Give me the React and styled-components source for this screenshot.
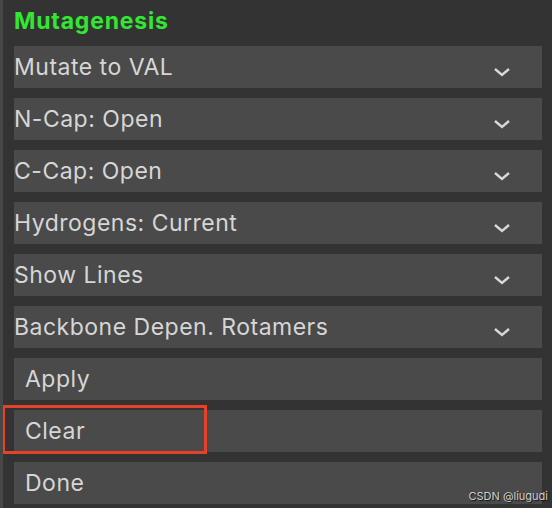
import React from "react";
import styled, { createGlobalStyle } from "styled-components";

const Global = createGlobalStyle`
  body {
    margin: 0;
    background: #333333;
    font-family: Inter, "Liberation Sans", Arial, sans-serif;
  }
`;

const Panel = styled.div`
  position: relative;
  width: 552px;
  height: 508px;
  box-sizing: border-box;
  padding: 0 10px 0 14px;
  background: #333333;
  border-left: 3px solid #474747;
  overflow: hidden;
`;

const Title = styled.div`
  height: 46px;
  margin-left: -3px;
  padding-top: 7px;
  box-sizing: border-box;
  font-size: 23px;
  font-weight: bold;
  letter-spacing: 0.8px;
  color: #33e633;
`;

const List = styled.div`
  display: flex;
  flex-direction: column;
  gap: 10px;
  margin-left: -3px;
`;

const Row = styled.div`
  position: relative;
  height: 42px;
  display: flex;
  align-items: center;
  justify-content: space-between;
  padding-left: ${(p) => (p.$button ? "11px" : "0")};
  padding-right: 31px;
  background: #4a4a4a;
  color: #d6d6d6;
  font-size: 23px;
  letter-spacing: 0.5px;
`;

const Chevron = styled.svg`
  width: 18px;
  height: 10px;
  margin-top: 9px;
`;

const Highlight = styled.div`
  position: absolute;
  left: -12px;
  top: -5px;
  width: 205px;
  height: 49px;
  box-sizing: border-box;
  border: 3px solid #e8412a;
`;

const Mark = styled.div`
  position: absolute;
  right: 4px;
  bottom: 5px;
  font-size: 11px;
  color: #cfcfcf;
  text-shadow: 1px 1px 1px #111;
`;

const selects = [
  "Mutate to VAL",
  "N-Cap: Open",
  "C-Cap: Open",
  "Hydrogens: Current",
  "Show Lines",
  "Backbone Depen. Rotamers",
];

function Down() {
  return (
    <Chevron viewBox="0 0 18 10">
      <path d="M2 2 L9 8 L16 2" fill="none" stroke="#d8d8d8" strokeWidth="2.4" />
    </Chevron>
  );
}

export default function App() {
  return (
    <>
      <Global />
      <Panel>
        <Title>Mutagenesis</Title>
        <List>
          {selects.map((s) => (
            <Row key={s}>
              <span>{s}</span>
              <Down />
            </Row>
          ))}
          <Row $button>Apply</Row>
          <Row $button>
            Clear
            <Highlight />
          </Row>
          <Row $button>Done</Row>
        </List>
        <Mark>CSDN @liugudi</Mark>
      </Panel>
    </>
  );
}
